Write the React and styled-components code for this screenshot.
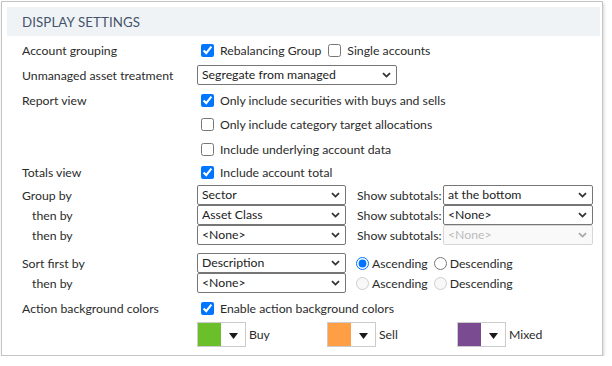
import React from "react";
import styled, { createGlobalStyle } from "styled-components";

const Global = createGlobalStyle`
  html, body { margin: 0; padding: 0; background: #fff; }
  body { font-family: Lato, "Open Sans", sans-serif; color: #2b2b2b; }
  * { box-sizing: border-box; }
`;

const Panel = styled.div`
  margin: 1px 0 0 1px;
  width: 602px;
  border: 1px solid #c4c4c4;
  box-shadow: 1px 2px 3px rgba(0, 0, 0, 0.18);
  padding: 5px 2px 8px 5px;
  background: #fff;
`;

const Header = styled.div`
  height: 29px;
  background: #eff3f6;
  display: flex;
  align-items: center;
  padding-left: 15px;
  font-size: 13.3px;
  color: #44546a;
  letter-spacing: 0.1px;
`;

const Body = styled.div`
  padding-left: 15px;
  display: flex;
  flex-direction: column;
  font-size: 12.25px;
`;

const Row = styled.div`
  display: flex;
  align-items: center;
  height: ${(p) => p.$h}px;
  margin-top: ${(p) => p.$mt || 0}px;
`;

const Label = styled.div`
  width: 175px;
  flex: none;
  padding-left: ${(p) => (p.$indent ? 10 : 0)}px;
  white-space: nowrap;
`;

const Controls = styled.div`
  display: flex;
  align-items: center;
`;

const CheckLabel = styled.label`
  display: inline-flex;
  align-items: center;
  margin-right: 7px;
  white-space: nowrap;
`;

const Check = styled.input.attrs({ type: "checkbox" })`
  width: 13px;
  height: 13px;
  margin: 0 6px 0 ${(p) => (p.$noLead ? 0 : 4)}px;
  accent-color: #0075ff;
`;

const Radio = styled.input.attrs({ type: "radio" })`
  width: 13px;
  height: 13px;
  margin: 0 3px 0 0;
  accent-color: #0075ff;
`;

const RadioGroup = styled.div`
  display: flex;
  align-items: center;
  margin-left: 10px;
`;

const RadioLabel = styled.label`
  display: inline-flex;
  align-items: center;
  margin-right: ${(p) => p.$mr || 0}px;
  white-space: nowrap;
`;

const SelectWrap = styled.div`
  position: relative;
  width: ${(p) => p.$w}px;
  height: 20px;
  flex: none;
`;

const NativeSelect = styled.select`
  appearance: none;
  -webkit-appearance: none;
  width: 100%;
  height: 100%;
  margin: 0;
  border: 1px solid ${(p) => (p.disabled ? "#c6c6c6" : "#767676")};
  border-radius: 2px;
  background: ${(p) => (p.disabled ? "#f7f7f7" : "#fff")};
  color: ${(p) => (p.disabled ? "#a0a0a0" : "#222")};
  font-family: inherit;
  font-size: 12.25px;
  padding: 0 20px 0 4px;
  line-height: 18px;
  outline: none;
`;

const Chevron = styled.svg`
  position: absolute;
  right: 6px;
  top: 50%;
  margin-top: -3px;
  width: 9px;
  height: 6px;
  pointer-events: none;
`;

const Subtotals = styled.span`
  width: 97px;
  padding-left: 11px;
  flex: none;
  white-space: nowrap;
`;

const ColorItem = styled.div`
  display: flex;
  align-items: center;
  width: 130px;
  flex: none;
`;

const Picker = styled.div`
  display: flex;
  width: 49px;
  height: 25px;
  border: 1px solid #cccccc;
  background: #fff;
  margin-right: 3px;
`;

const Swatch = styled.div`
  width: 23px;
  height: 23px;
  background: ${(p) => p.$c};
`;

const Arrow = styled.div`
  flex: 1;
  display: flex;
  align-items: center;
  justify-content: center;
  padding-top: 3px;
`;

function Select({ w, value, disabled }) {
  return (
    <SelectWrap $w={w}>
      <NativeSelect disabled={disabled} defaultValue={value}>
        <option>{value}</option>
      </NativeSelect>
      <Chevron viewBox="0 0 9 6">
        <path
          d="M1 1.2 L4.5 4.6 L8 1.2"
          fill="none"
          stroke={disabled ? "#a8a8a8" : "#333"}
          strokeWidth="1.8"
        />
      </Chevron>
    </SelectWrap>
  );
}

function ColorPick({ color, label }) {
  return (
    <ColorItem>
      <Picker>
        <Swatch $c={color} />
        <Arrow>
          <svg width="9" height="6" viewBox="0 0 9 6">
            <path d="M0 0 H9 L4.5 6 Z" fill="#1a1a1a" />
          </svg>
        </Arrow>
      </Picker>
      <span>{label}</span>
    </ColorItem>
  );
}

function SubRow({ label, indent, value, sub, subDisabled, mt }) {
  return (
    <Row $h={20} $mt={mt}>
      <Label $indent={indent}>{label}</Label>
      <Controls>
        <Select w={149} value={value} />
        <Subtotals>Show subtotals:</Subtotals>
        <Select w={150} value={sub} disabled={subDisabled} />
      </Controls>
    </Row>
  );
}

function SortRow({ label, indent, value, disabled, mt }) {
  return (
    <Row $h={20} $mt={mt}>
      <Label $indent={indent}>{label}</Label>
      <Controls>
        <Select w={149} value={value} />
        <RadioGroup>
          <RadioLabel $mr={6}>
            <Radio name={label} defaultChecked={!disabled} disabled={disabled} />
            Ascending
          </RadioLabel>
          <RadioLabel>
            <Radio name={label} disabled={disabled} />
            Descending
          </RadioLabel>
        </RadioGroup>
      </Controls>
    </Row>
  );
}

export default function App() {
  return (
    <>
      <Global />
      <Panel>
        <Header>DISPLAY SETTINGS</Header>
        <Body>
          <Row $h={23} $mt={3}>
            <Label>Account grouping</Label>
            <Controls>
              <CheckLabel>
                <Check defaultChecked />
                Rebalancing Group
              </CheckLabel>
              <CheckLabel>
                <Check $noLead />
                Single accounts
              </CheckLabel>
            </Controls>
          </Row>
          <Row $h={26}>
            <Label>Unmanaged asset treatment</Label>
            <Select w={200} value="Segregate from managed" />
          </Row>
          <Row $h={24}>
            <Label>Report view</Label>
            <CheckLabel>
              <Check defaultChecked />
              Only include securities with buys and sells
            </CheckLabel>
          </Row>
          <Row $h={25}>
            <Label />
            <CheckLabel>
              <Check />
              Only include category target allocations
            </CheckLabel>
          </Row>
          <Row $h={24}>
            <Label />
            <CheckLabel>
              <Check />
              Include underlying account data
            </CheckLabel>
          </Row>
          <Row $h={23}>
            <Label>Totals view</Label>
            <CheckLabel>
              <Check defaultChecked />
              Include account total
            </CheckLabel>
          </Row>
          <SubRow label="Group by" value="Sector" sub="at the bottom" mt={1} />
          <SubRow label="then by" indent value="Asset Class" sub="<None>" />
          <SubRow label="then by" indent value="<None>" sub="<None>" subDisabled />
          <SortRow label="Sort first by" value="Description" mt={8} />
          <SortRow label="then by" indent value="<None>" disabled />
          <Row $h={24} $mt={3}>
            <Label>Action background colors</Label>
            <CheckLabel>
              <Check defaultChecked />
              Enable action background colors
            </CheckLabel>
          </Row>
          <Row $h={25} $mt={2}>
            <Label />
            <ColorPick color="#6abf2b" label="Buy" />
            <ColorPick color="#ff9f45" label="Sell" />
            <ColorPick color="#7b4b91" label="Mixed" />
          </Row>
        </Body>
      </Panel>
    </>
  );
}
